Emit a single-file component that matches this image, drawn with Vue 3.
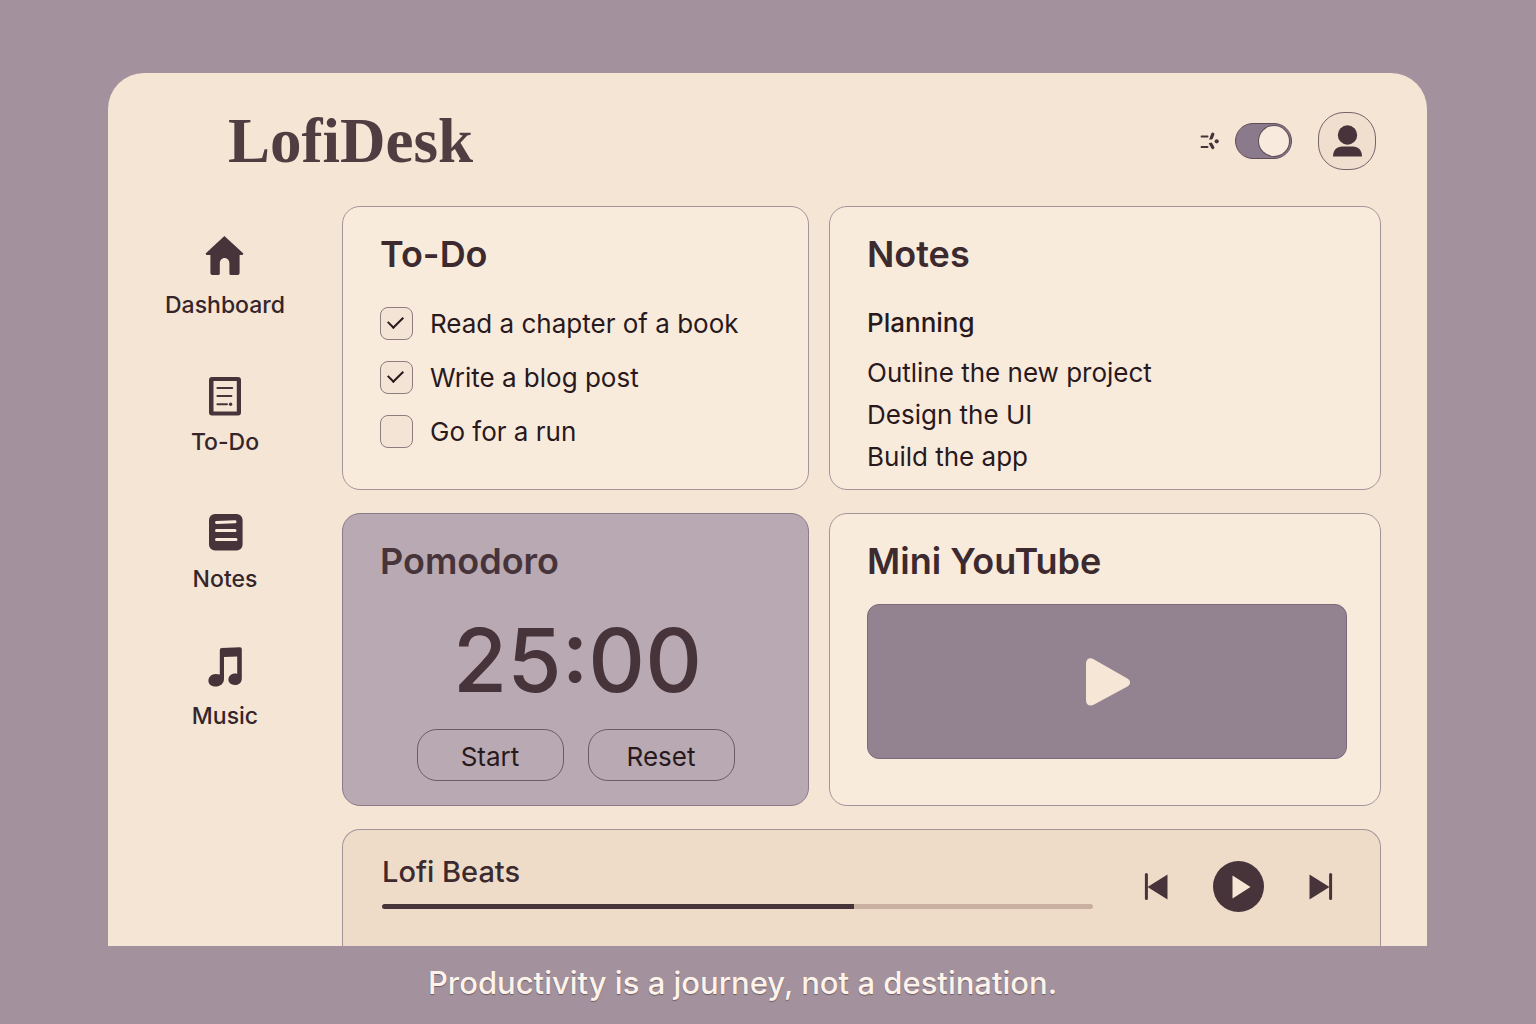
<script setup>
import { computed, onBeforeUnmount, ref } from 'vue'

const tasks = ref([
  { id: 'read', text: 'Read a chapter of a book', done: true },
  { id: 'write', text: 'Write a blog post', done: true },
  { id: 'run', text: 'Go for a run', done: false },
])

const noteLines = ['Outline the new project', 'Design the UI', 'Build the app']

const dark = ref(true)
const position = ref(664)
const played = computed(() => `${position.value / 10}%`)

const SESSION = 25 * 60
const seconds = ref(SESSION)
const clock = computed(() => {
  const m = String(Math.floor(seconds.value / 60)).padStart(2, '0')
  const s = String(seconds.value % 60).padStart(2, '0')
  return `${m}:${s}`
})

let timer = null
function start() {
  if (timer) return
  timer = setInterval(() => {
    if (seconds.value > 0) seconds.value -= 1
  }, 1000)
}
function reset() {
  clearInterval(timer)
  timer = null
  seconds.value = SESSION
}
onBeforeUnmount(() => clearInterval(timer))
</script>

<template>
  <div class="page">
    <div class="desk">
      <header class="top">
        <h1 class="brand">LofiDesk</h1>
        <div class="tools">
          <label class="theme">
            <svg class="spark" viewBox="0 0 20 20" aria-hidden="true">
              <path d="M1.5 5.5H7.600M1.5 16H7.600" stroke-width="1.800" />
              <path d="M12.800 3.200 11.400 6.800M11 13.200 12.800 16.600" stroke-width="3.200" />
              <path d="M10 8 11.400 6.800M9.600 12.800H11" stroke-width="1.600" />
              <circle cx="16.700" cy="10.300" r="2.100" />
            </svg>
            <input v-model="dark" class="switch" type="checkbox" role="switch" aria-label="Theme" />
          </label>
          <button class="avatar" type="button" aria-label="Account">
            <svg viewBox="0 0 32 34" aria-hidden="true">
              <circle cx="16.500" cy="11" r="9.700" />
              <path d="M2 32.500C2 26 6 22.500 11 22.500h11C27 22.500 31 26 31 32.500Z" />
            </svg>
          </button>
        </div>
      </header>

      <div class="body">
        <nav class="side" aria-label="Main">
          <a class="link" href="#dashboard">
            <svg viewBox="0 0 40 48" aria-hidden="true">
              <path
                d="M19.4 4 38.4 21.6 37.6 23H34.6V41a2 2 0 0 1-2 2H26a1.600 1.600 0 0 1-1.600-1.600V31.400c0-3-2-5.400-4.800-5.400s-4.800 2.400-4.800 5.400V41.400A1.600 1.600 0 0 1 13.200 43H7.400a2 2 0 0 1-2-2V23H1.400L.6 21.600Z"
              />
            </svg>
            Dashboard
          </a>
          <a class="link" href="#todo">
            <svg viewBox="0 0 40 48" aria-hidden="true">
              <path
                fill-rule="evenodd"
                d="M7 8H33a3 3 0 0 1 3 3V43.600a3 3 0 0 1-3 3H7a3 3 0 0 1-3-3V11a3 3 0 0 1 3-3ZM8.500 12V42.600H31.800V12Z"
              />
              <path class="rule" d="M12.400 19H27.200M12.400 27H26.400M12.400 35.200H22" />
              <circle cx="25.600" cy="35.200" r="1.700" />
            </svg>
            To-Do
          </a>
          <a class="link" href="#notes">
            <svg viewBox="0 0 40 48" aria-hidden="true">
              <rect x="4" y="8" width="33.600" height="36.400" rx="6" />
              <path class="cut" d="M11.500 16.500 30 15.800M11.500 24.600H30M11.500 33.600H31" />
            </svg>
            Notes
          </a>
          <a class="link" href="#music">
            <svg viewBox="0 0 40 48" aria-hidden="true">
              <path
                d="M14.800 7.200Q14.800 5.200 16.800 5.100L35 4.200Q36.800 4.200 36.800 6V35.400C36.800 39.600 33.600 42 29.800 42c-3.800 0-6.400-2.200-6.400-5.400 0-3.400 3-6 6.600-6 .9 0 1.500.1 2.200.4V13.600L19 14V35.800C19 40.400 15.400 43.600 10.400 43.600c-4.200 0-7-2.400-7-5.800 0-3.900 3.200-6.800 7.400-6.800 1.500 0 2.800.2 4 .6Z"
              />
            </svg>
            Music
          </a>
        </nav>

        <main class="board">
          <section class="card" aria-labelledby="todo-title">
            <h2 id="todo-title">To-Do</h2>
            <ul class="tasks">
              <li v-for="task in tasks" :key="task.id">
                <label class="task">
                  <input v-model="task.done" type="checkbox" />
                  <span>{{ task.text }}</span>
                </label>
              </li>
            </ul>
          </section>

          <section class="card" aria-labelledby="notes-title">
            <h2 id="notes-title">Notes</h2>
            <h3 class="note-head">Planning</h3>
            <p v-for="line in noteLines" :key="line" class="note-line">{{ line }}</p>
          </section>

          <section class="card pomodoro" aria-labelledby="pomodoro-title">
            <h2 id="pomodoro-title">Pomodoro</h2>
            <div class="clock" role="timer">{{ clock }}</div>
            <div class="actions">
              <button class="pill" type="button" @click="start">Start</button>
              <button class="pill" type="button" @click="reset">Reset</button>
            </div>
          </section>

          <section class="card" aria-labelledby="video-title">
            <h2 id="video-title">Mini YouTube</h2>
            <button class="video" type="button" aria-label="Play video">
              <svg viewBox="0 0 46 50" aria-hidden="true">
                <path
                  d="M2 6.500C2 1.800 6 .2 9.600 2.200L43.400 21.400C47 23.600 47 27.400 43.400 29.600L9.600 47.800C6 49.800 2 48 2 43.600Z"
                />
              </svg>
            </button>
          </section>

          <section class="player" aria-labelledby="track-title">
            <div class="track">
              <h2 id="track-title" class="track-title">Lofi Beats</h2>
              <input
                v-model.number="position"
                class="seek"
                type="range"
                min="0"
                max="1000"
                aria-labelledby="track-title"
                :style="{ '--played': played }"
              />
            </div>
            <div class="controls">
              <button class="skip" type="button" aria-label="Previous track">
                <svg viewBox="0 0 24 30" aria-hidden="true">
                  <path class="bar" d="M2.400 2.500V26.500" />
                  <path d="M3.500 15 23.500 2.500V27.500Z" />
                </svg>
              </button>
              <button class="play" type="button" aria-label="Play">
                <svg viewBox="0 0 51 51" aria-hidden="true">
                  <circle cx="25.500" cy="25.500" r="25.500" />
                  <path class="hole" d="M19.500 14.500V37.500L37.500 26Z" />
                </svg>
              </button>
              <button class="skip" type="button" aria-label="Next track">
                <svg viewBox="0 0 24 30" aria-hidden="true">
                  <path class="bar" d="M21.600 2.500V26.500" />
                  <path d="M20.500 15 .5 2.500V27.500Z" />
                </svg>
              </button>
            </div>
          </section>
        </main>
      </div>
    </div>

    <footer class="motto">Productivity is a journey, not a destination.</footer>
  </div>
</template>

<style>
body {
  margin: 0;
  background: #a3929e;
}
</style>

<style scoped>
.page {
  --ink: #46343a;
  --text: #28191d;
  --line: #a3949a;
  box-sizing: border-box;
  min-height: 100vh;
  padding: 73px 109px 0 108px;
  background: #a3929e;
  color: var(--text);
  font-family: Inter, "Liberation Sans", sans-serif;
}

h1,
h2,
h3,
p,
ul {
  margin: 0;
  padding: 0;
}

svg {
  display: block;
  fill: var(--ink);
}

button {
  padding: 0;
  border: 0;
  background: none;
  color: inherit;
  font: inherit;
  cursor: pointer;
}

.desk {
  border-radius: 36px 36px 0 0;
  background: #f4e5d5;
}

.top {
  display: flex;
  align-items: center;
  justify-content: space-between;
  padding: 39px 51px 36px 120px;
}

.brand {
  color: #503d41;
  font: bold 63px/58px "Liberation Serif", serif;
}

.tools,
.theme {
  display: flex;
  align-items: center;
}

.tools {
  gap: 26px;
}

.theme {
  gap: 15px;
}

.spark {
  width: 20px;
  height: 20px;
  stroke: var(--ink);
  stroke-linecap: round;
}

.spark circle {
  stroke: none;
}

.switch {
  display: flex;
  box-sizing: border-box;
  width: 57px;
  height: 36px;
  margin: 0;
  padding: 2px;
  border: 1px solid #5f4d58;
  border-radius: 18px;
  appearance: none;
  background: #8b7a8c;
}

.switch::before {
  width: 30px;
  height: 30px;
  border-radius: 50%;
  background: #f8ebdd;
  box-shadow: 0 0 0 1px #5f4d58;
  content: "";
}

.switch:checked::before {
  margin-left: auto;
}

.avatar {
  display: grid;
  box-sizing: border-box;
  width: 58px;
  height: 58px;
  place-items: center;
  border: 1px solid #75646a;
  border-radius: 26px;
  background: #f0dece;
}

.avatar svg {
  width: 32px;
  height: 34px;
}

.body {
  display: flex;
}

.side {
  display: flex;
  flex: 0 0 234px;
  flex-direction: column;
  align-items: center;
  gap: 49px;
  padding-top: 26px;
}

.link {
  display: flex;
  flex-direction: column;
  align-items: center;
  gap: 10px;
  color: #35252a;
  font-size: 23px;
  font-weight: 500;
  line-height: 30px;
  text-decoration: none;
}

.link svg {
  width: 40px;
  height: 48px;
}

.rule {
  stroke: var(--ink);
  stroke-linecap: round;
  stroke-width: 2;
}

.cut {
  stroke: #f9ebdc;
  stroke-linecap: round;
  stroke-width: 3;
}

.board {
  display: grid;
  flex: 1;
  grid-template-columns: 467fr 552fr;
  gap: 23px 20px;
  padding-right: 46px;
}

.card,
.player {
  border: 1px solid var(--line);
}

.card {
  padding: 27px 33px 11px 37px;
  border-radius: 18px;
  background: #f9ebdc;
}

h2 {
  color: #3c2a2f;
  font-size: 36px;
  font-weight: 600;
  line-height: 40px;
}

.tasks {
  display: grid;
  gap: 21px;
  margin-top: 33px;
  list-style: none;
}

.task {
  display: flex;
  align-items: center;
  gap: 17px;
  font-size: 26px;
  line-height: 33px;
}

.task input {
  display: grid;
  box-sizing: border-box;
  width: 33px;
  height: 33px;
  margin: 0;
  place-items: center;
  border: 1px solid #8d7c80;
  border-radius: 8px;
  appearance: none;
  background: #f4e4d5;
}

.task input:checked::before {
  box-sizing: border-box;
  width: 9px;
  height: 15px;
  margin: -6px 2px 0 0;
  border: solid var(--text);
  border-width: 0 2px 2px 0;
  rotate: 45deg;
  content: "";
}

.note-head,
.note-line {
  font-size: 26px;
  font-weight: 400;
  line-height: 42px;
}

.note-head {
  margin: 28px 0 8px;
  font-weight: 500;
}

.pomodoro {
  border-color: #8b7a8a;
  background: #b9a9b2;
}

.pomodoro h2 {
  color: var(--ink);
}

.clock {
  margin-top: 34px;
  color: var(--ink);
  font-size: 88px;
  font-weight: 500;
  line-height: 90px;
  text-align: center;
}

.actions {
  display: flex;
  justify-content: center;
  gap: 24px;
  margin: 24px 0 13px;
  padding-right: 4px;
}

.pill {
  box-sizing: border-box;
  width: 147px;
  height: 52px;
  padding-top: 3px;
  border: 1px solid #6d5b63;
  border-radius: 20px;
  font-size: 26px;
}

.video {
  display: grid;
  box-sizing: border-box;
  width: 100%;
  height: 155px;
  margin-top: 23px;
  place-items: center;
  border: 1px solid #7c6a7c;
  border-radius: 12px;
  background: #938290;
}

.video svg {
  width: 46px;
  height: 50px;
  fill: #f6e6d6;
}

.player {
  display: flex;
  grid-column: 1 / -1;
  align-items: flex-start;
  gap: 51px;
  padding: 25px 47px 34px 39px;
  border-bottom: 0;
  border-radius: 18px 18px 0 0;
  background: #eedcc9;
}

.track {
  flex: 1;
}

.track-title {
  font-size: 29px;
  font-weight: 500;
  line-height: 34px;
}

.seek {
  display: block;
  width: 100%;
  height: 5px;
  margin: 15px 0 0;
  border-radius: 3px;
  appearance: none;
  background: linear-gradient(to right, var(--ink) var(--played), #c9b0a1 var(--played));
}

.seek::-webkit-slider-thumb {
  width: 5px;
  height: 5px;
  appearance: none;
}

.controls {
  display: flex;
  align-items: center;
  gap: 45px;
  margin-top: 6px;
}

.skip svg {
  width: 24px;
  height: 30px;
}

.play svg {
  width: 51px;
  height: 51px;
}

.bar {
  stroke: var(--ink);
  stroke-linecap: round;
  stroke-width: 3;
}

.hole {
  fill: #f6e6d6;
}

.motto {
  padding: 17px 50px 21px 0;
  color: #fdf3ea;
  font-size: 31px;
  font-weight: 500;
  line-height: 40px;
  text-align: center;
  text-shadow: 0 1px 1px #6c5a62;
}
</style>
